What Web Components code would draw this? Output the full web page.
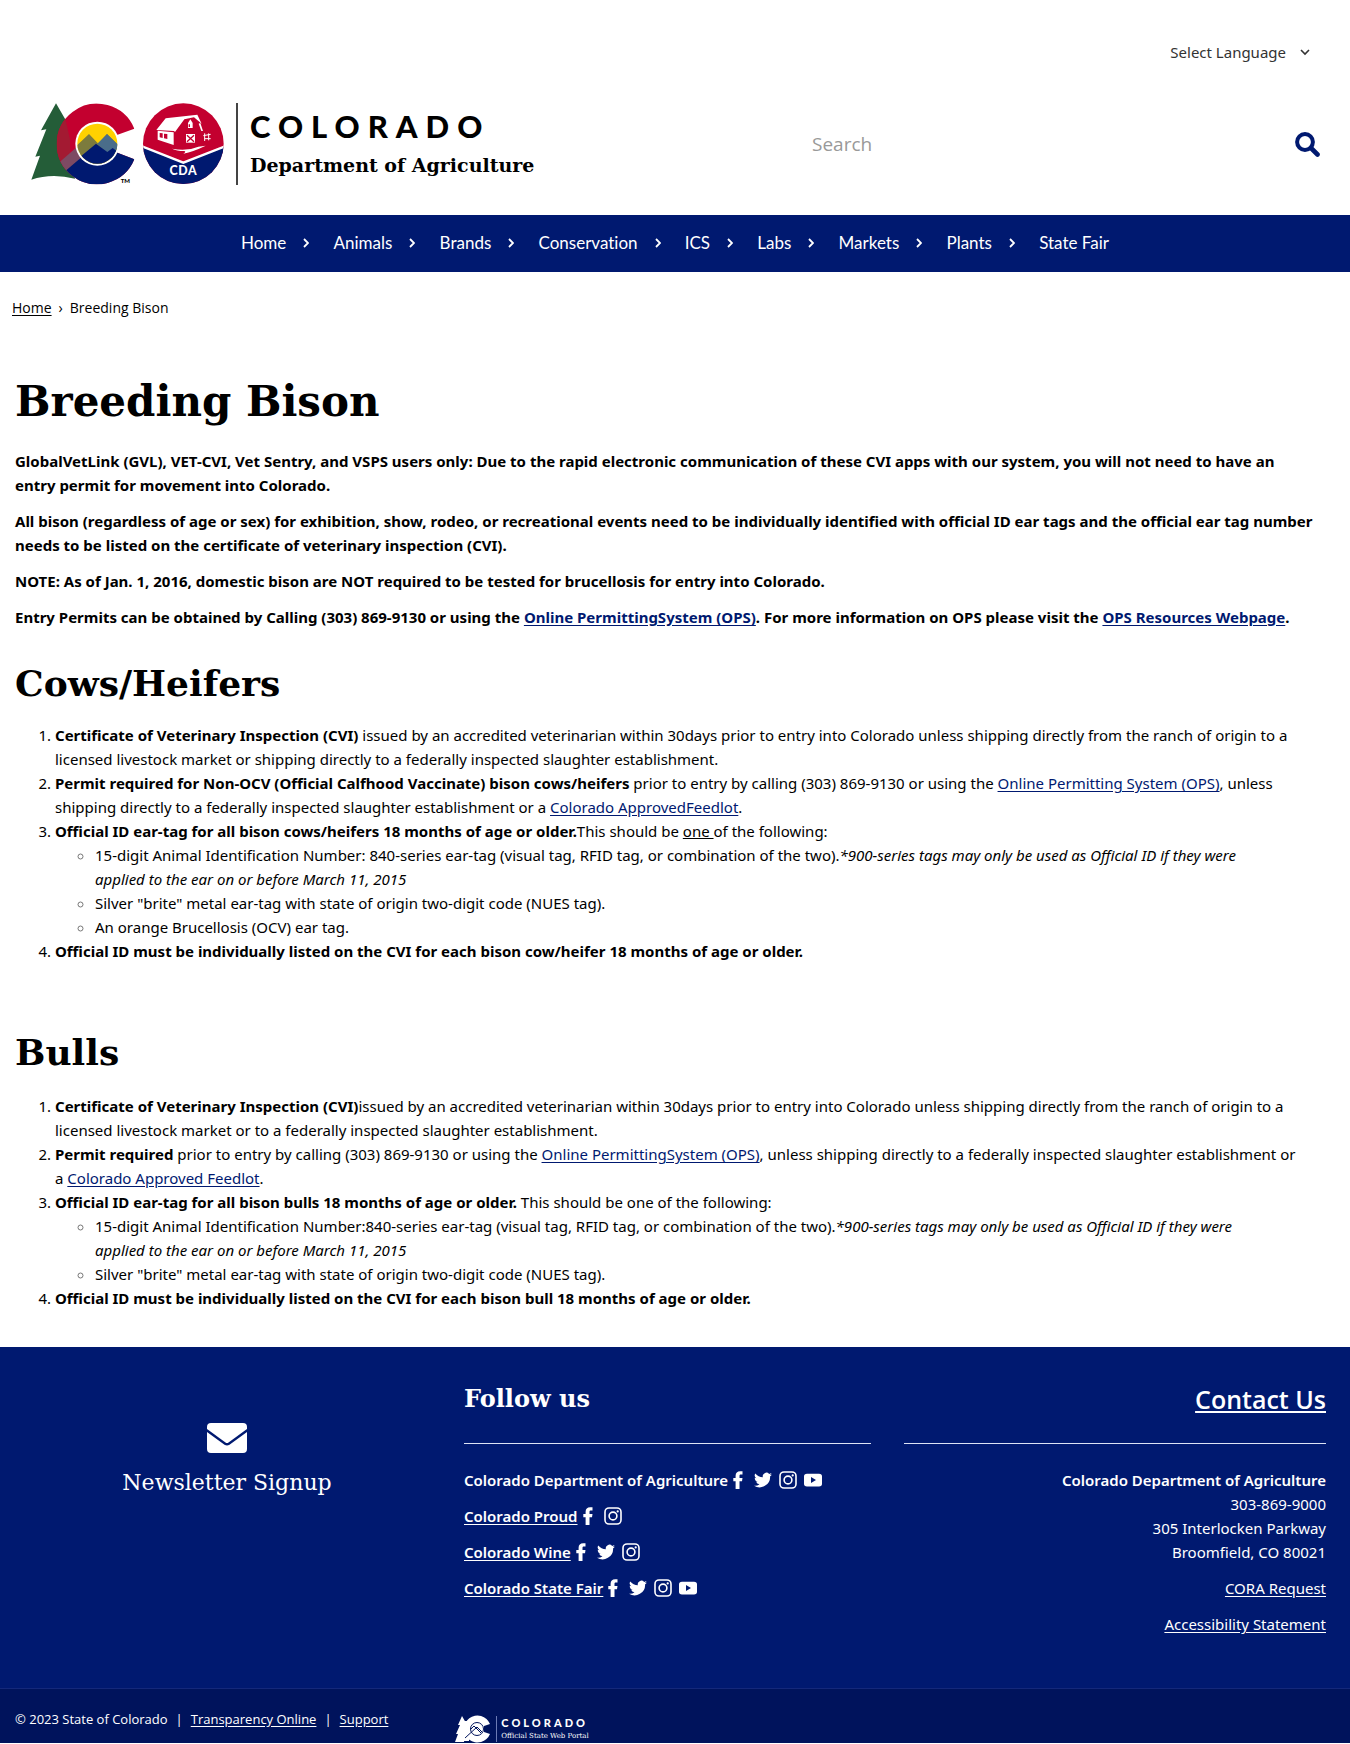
<!DOCTYPE html>
<html lang="en">
<head>
<meta charset="utf-8">
<title>Breeding Bison | Department of Agriculture</title>
<style>
  body {
    --navy: #001970;
    --sans: Lato, "Open Sans", sans-serif;
    --body: "Noto Sans", "Open Sans", sans-serif;
    --label: "Open Sans", "Noto Sans", sans-serif;
    --slab: "DejaVu Serif", serif;
    margin: 0;
    background: #fff;
    color: #000;
    font: 15px/24px var(--body);
  }
</style>
</head>
<body>
<co-header></co-header>
<co-nav></co-nav>
<co-crumbs>Breeding Bison</co-crumbs>
<co-article></co-article>
<co-footer></co-footer>

<script>
function define(name, html) {
  const template = document.createElement('template');
  template.innerHTML = html;
  customElements.define(name, class extends HTMLElement {
    constructor() {
      super();
      this.attachShadow({ mode: 'open' }).append(template.content.cloneNode(true));
    }
  });
}

/* Single icons, chosen by the name attribute */
const ICONS = {
  facebook: ['0 0 18 18', '<path d="M6.600 18V10.200H4.300V6.900H6.600V4.700C6.600 1.700 8.300.2 11.200.2H13.500V3.500H12C10.900 3.500 10.500 4 10.500 4.900V6.900H13.500L13 10.200H10.500V18Z"/>'],
  twitter: ['0 0 24 24', '<path d="M24 4.600a10 10 0 0 1-2.800.8 5 5 0 0 0 2.100-2.700 10 10 0 0 1-3.100 1.200 4.900 4.900 0 0 0-8.400 4.500A14 14 0 0 1 1.700 3.200a4.900 4.900 0 0 0 1.500 6.500 4.900 4.900 0 0 1-2.200-.6v.1a4.900 4.900 0 0 0 3.900 4.800 4.900 4.900 0 0 1-2.200.1 4.900 4.900 0 0 0 4.600 3.400A9.900 9.900 0 0 1 0 19.500a14 14 0 0 0 21.500-12.400A10 10 0 0 0 24 4.600z"/>'],
  instagram: ['0 0 18 18', '<rect x="1" y="1" width="16" height="16" rx="4" fill="none" stroke="currentColor" stroke-width="1.600"/><circle cx="9" cy="9" r="3.900" fill="none" stroke="currentColor" stroke-width="1.600"/><circle cx="13.700" cy="4.400" r="1.100"/>'],
  youtube: ['0 0 18 18', '<path fill-rule="evenodd" d="M3 2.800H15Q18 2.800 18 5.500V12.700Q18 15.400 15 15.400H3Q0 15.400 0 12.700V5.500Q0 2.800 3 2.800ZM7 6V12L12 9Z"/>'],
  envelope: ['0 0 40 30', '<path d="M4 0H36Q40 0 40 4V6L21.500 19.600Q20 20.600 18.500 19.600L0 6V4Q0 0 4 0Z"/><path d="M0 9L17.500 21.800Q20 23.400 22.500 21.800L40 9V26Q40 30 36 30H4Q0 30 0 26Z"/>'],
  search: ['0 0 25 25', '<circle cx="10" cy="10" r="7.900" fill="none" stroke="currentColor" stroke-width="4"/><path d="M16 16L22.500 22.500" stroke="currentColor" stroke-width="4.600" stroke-linecap="round"/>'],
  right: ['0 0 6 10', '<path d="M1 1L5 5L1 9" fill="none" stroke="currentColor" stroke-width="1.800"/>'],
  down: ['0 0 10 10', '<path d="M1 3L5 7L9 3" fill="none" stroke="currentColor" stroke-width="1.600"/>']
};
customElements.define('co-icon', class extends HTMLElement {
  constructor() {
    super();
    const [box, body] = ICONS[this.getAttribute('name')];
    this.attachShadow({ mode: 'open' }).innerHTML =
      `<style>:host{display:block;flex:none;width:18px;height:18px}svg{display:block;width:100%;height:100%;fill:currentColor}</style>
       <svg viewBox="${box}" aria-hidden="true">${body}</svg>`;
  }
});

define('co-logo', `
<style>
  :host { display: flex; height: 82px; align-items: stretch; }
  svg { display: block; width: 196px; height: 82px; flex: none; overflow: visible; }
  svg text { font-family: var(--sans); font-weight: 900; }
  .words { margin-left: 9px; padding-left: 12px; border-left: 2px solid #444; display: flex; flex-direction: column; justify-content: center; gap: 9px; }
  .state { font: 900 31px/32px var(--sans); letter-spacing: 8px; }
  .dept { font: bold 19px/28px var(--slab); white-space: nowrap; }
</style>
<svg viewBox="33 41 588 246" role="img" aria-label="State of Colorado and Department of Agriculture">
  <defs>
    <clipPath id="c"><path d="M343 118A121 121 0 1 0 343 210L288 189A60 60 0 1 1 288 138Z"/><circle cx="232" cy="163" r="62"/></clipPath>
    <clipPath id="sun"><circle cx="232" cy="163" r="60"/></clipPath>
    <clipPath id="badge"><circle cx="490" cy="163" r="121"/></clipPath>
  </defs>
  <path fill="#245d38" d="M108 42L137 92L172 150L155 200L165 268Q95 250 34 271L60 199L46 202L79 120L63 123Z"/>
  <g clip-path="url(#c)">
    <rect x="100" y="30" width="260" height="260" fill="#c3002f"/>
    <path d="M108 42L137 92L150 150V268H100V60Z" fill="#a31a32"/>
    <path d="M100 235L180 165L230 185L180 290H100Z" fill="#7d4a63"/>
    <path d="M130 250L232 163L290 180L350 190V300H130Z" fill="#001970"/>
  </g>
  <circle cx="232" cy="163" r="66" fill="#fff"/>
  <g clip-path="url(#sun)">
    <rect x="170" y="100" width="125" height="125" fill="#ffd100"/>
    <path d="M160 178L207 134L235 163L261 134L300 172V230H160Z" fill="#7c7b3d"/>
    <path d="M232 163L261 134L300 172V230Z" fill="#4a6d8a"/>
    <path d="M160 220L228 163L262 188L278 176L300 192V240H160Z" fill="#001970"/>
  </g>
  <text x="302" y="282" font-size="18">TM</text>
  <circle cx="490" cy="163" r="121" fill="#c3002f"/>
  <g clip-path="url(#badge)">
    <path d="M365 171L490 220L615 171V290H365Z" fill="#001970"/>
    <path d="M365 171L490 220L615 171" fill="none" stroke="#fff" stroke-width="7"/>
  </g>
  <g fill="#fff">
    <path d="M409 122L437 87L532 76L545 103L522 84L493 90L465 128L462 125Z"/>
    <path d="M413 124L461 129V167L413 151Z"/>
    <path d="M504 101L511 90L518 101V116H504Z"/>
    <path d="M498 134H525V160H498Z"/>
    <path d="M541 101L549 125H544L536 103Z"/>
    <path d="M456 178Q500 187 535 172L557 169Q520 187 490 193Q500 187 493 185Q470 185 456 178Z"/>
  </g>
  <path d="M419 131L428 132V146L419 144ZM432 133L442 134V149L432 147Z" fill="#c3002f"/>
  <path d="M501 138L522 157M522 138L501 157M508 105V113" stroke="#c3002f" stroke-width="4"/>
  <path d="M554 155V132M566 153V132M550 139L572 135M554 148H572" stroke="#fff" stroke-width="3"/>
  <text x="490" y="258" font-size="37" text-anchor="middle" letter-spacing="2" fill="#fff">CDA</text>
</svg>
<div class="words"><span class="state">COLORADO</span><span class="dept">Department of Agriculture</span></div>
`);

define('co-header', `
<style>
  :host { display: block; padding: 40px 30px 30px 31px; }
  .lang { display: flex; justify-content: flex-end; align-items: center; gap: 14px; padding-right: 10px; color: #333; }
  select { appearance: none; border: 0; background: none; padding: 0; margin: 0; color: inherit; font: 15px/24px var(--body); field-sizing: content; }
  .lang co-icon { width: 10px; height: 10px; }
  .row { display: flex; align-items: center; justify-content: space-between; margin-top: 39px; }
  form { display: flex; align-items: center; flex: 0 1 508px; margin: 0; }
  input { flex: 1; min-width: 0; border: 0; padding: 0; background: none; font: 19px/28px var(--label); color: #333; outline: 0; }
  input::placeholder { color: #999; }
  button { border: 0; background: none; padding: 0; color: var(--navy); }
  button co-icon { width: 25px; height: 25px; }
</style>
<div class="lang"><select aria-label="Select Language"><option>Select Language</option></select><co-icon name="down"></co-icon></div>
<div class="row">
  <co-logo></co-logo>
  <form role="search"><input type="search" placeholder="Search" aria-label="Search"><button type="button" aria-label="Search"><co-icon name="search"></co-icon></button></form>
</div>
`);

define('co-nav-item', `
<style>
  :host { display: flex; align-items: center; gap: 17px; }
  a { color: #fff; text-decoration: none; font: 17px/24px var(--sans); font-variant-ligatures: none; }
  co-icon { width: 6px; height: 10px; }
  :host([last]) co-icon { display: none; }
</style>
<a href="#"><slot></slot></a><co-icon name="right"></co-icon>
`);

define('co-nav', `
<style>
  :host { display: block; background: var(--navy); color: #fff; }
  nav { display: flex; justify-content: space-between; max-width: 868px; margin: 0 auto; padding: 16px 0 17px; }
</style>
<nav aria-label="Main">
  <co-nav-item>Home</co-nav-item><co-nav-item>Animals</co-nav-item><co-nav-item>Brands</co-nav-item>
  <co-nav-item>Conservation</co-nav-item><co-nav-item>ICS</co-nav-item><co-nav-item>Labs</co-nav-item>
  <co-nav-item>Markets</co-nav-item><co-nav-item>Plants</co-nav-item><co-nav-item last>State Fair</co-nav-item>
</nav>
`);

define('co-crumbs', `
<style>
  :host { display: block; padding: 24px 12px 0; font-family: var(--label); font-size: 14px; }
  nav { display: flex; gap: 7px; }
  a { color: inherit; text-underline-offset: 2px; }
</style>
<nav aria-label="Breadcrumb"><a href="#">Home</a><span>›</span><span><slot></slot></span></nav>
`);

define('co-article', `
<style>
  :host { display: block; padding: 54px 15px 37px; }
  h1, h2 { margin: 0; font-family: var(--slab); font-weight: bold; }
  h1 { font-size: 42px; line-height: 56px; margin-bottom: 19px; }
  h2 { font-size: 36px; line-height: 48px; margin: 30px 0 16px; }
  p { margin: 0 0 12px; font-weight: 700; }
  ol, ul { margin: 0; padding-left: 40px; }
  ol + h2 { margin: 65px 0 18px; }
  ul li::marker { color: #777; }
  a { color: var(--navy); text-underline-offset: 2px; }
</style>
<h1>Breeding Bison</h1>
<p>GlobalVetLink (GVL), VET-CVI, Vet Sentry, and VSPS users only: Due to the rapid electronic communication of these CVI apps with our system, you will not need to have an<br>entry permit for movement into Colorado.</p>
<p>All bison (regardless of age or sex) for exhibition, show, rodeo, or recreational events need to be individually identified with official ID ear tags and the official ear tag number needs to be listed on the certificate of veterinary inspection (CVI).</p>
<p>NOTE: As of Jan. 1, 2016, domestic bison are NOT required to be tested for brucellosis for entry into Colorado.</p>
<p>Entry Permits can be obtained by Calling (303) 869-9130 or using the <a href="#">Online PermittingSystem (OPS)</a>. For more information on OPS please visit the <a href="#">OPS Resources Webpage</a>.</p>
<h2>Cows/Heifers</h2>
<ol>
  <li><b>Certificate of Veterinary Inspection (CVI)</b> issued by an accredited veterinarian within 30days prior to entry into Colorado unless shipping directly from the ranch of origin to a<br>licensed livestock market or shipping directly to a federally inspected slaughter establishment.</li>
  <li><b>Permit required for Non-OCV (Official Calfhood Vaccinate) bison cows/heifers</b> prior to entry by calling (303) 869-9130 or using the <a href="#">Online Permitting System (OPS)</a>, unless<br>shipping directly to a federally inspected slaughter establishment or a <a href="#">Colorado ApprovedFeedlot</a>.</li>
  <li><b>Official ID ear-tag for all bison cows/heifers 18 months of age or older.</b>This should be <u>one </u>of the following:
    <ul>
      <li>15-digit Animal Identification Number: 840-series ear-tag (visual tag, RFID tag, or combination of the two).<i>*900-series tags may only be used as Official ID if they were<br>applied to the ear on or before March 11, 2015</i></li>
      <li>Silver "brite" metal ear-tag with state of origin two-digit code (NUES tag).</li>
      <li>An orange Brucellosis (OCV) ear tag.</li>
    </ul></li>
  <li><b>Official ID must be individually listed on the CVI for each bison cow/heifer 18 months of age or older.</b></li>
</ol>
<h2>Bulls</h2>
<ol>
  <li><b>Certificate of Veterinary Inspection (CVI)</b>issued by an accredited veterinarian within 30days prior to entry into Colorado unless shipping directly from the ranch of origin to a<br>licensed livestock market or to a federally inspected slaughter establishment.</li>
  <li><b>Permit required</b> prior to entry by calling (303) 869-9130 or using the <a href="#">Online PermittingSystem (OPS)</a>, unless shipping directly to a federally inspected slaughter establishment or<br>a <a href="#">Colorado Approved Feedlot</a>.</li>
  <li><b>Official ID ear-tag for all bison bulls 18 months of age or older.</b> This should be one of the following:
    <ul>
      <li>15-digit Animal Identification Number:840-series ear-tag (visual tag, RFID tag, or combination of the two).<i>*900-series tags may only be used as Official ID if they were<br>applied to the ear on or before March 11, 2015</i></li>
      <li>Silver "brite" metal ear-tag with state of origin two-digit code (NUES tag).</li>
    </ul></li>
  <li><b>Official ID must be individually listed on the CVI for each bison bull 18 months of age or older.</b></li>
</ol>
`);

/* One row of accounts; the nets attribute lists the networks */
customElements.define('co-social', class extends HTMLElement {
  constructor() {
    super();
    const links = this.getAttribute('nets').split(' ')
      .map(n => `<a href="#" aria-label="${n}"><co-icon name="${n}"></co-icon></a>`).join('');
    this.attachShadow({ mode: 'open' }).innerHTML =
      `<style>:host{display:flex;align-items:center;gap:1px;margin-bottom:12px;font-weight:600}
       .nets{display:flex;gap:7px}a{color:#fff}</style><slot></slot><span class="nets">${links}</span>`;
  }
});

define('co-footer', `
<style>
  :host { display: block; background: var(--navy); color: #fff; }
  a { color: #fff; text-underline-offset: 2px; }
  b { font-weight: 600; }
  .cols { display: grid; grid-template-columns: 449fr 407fr 455fr; padding: 32px 24px 40px 15px; }
  .news { display: flex; flex-direction: column; align-items: center; gap: 16px; padding: 44px 25px 0 0; font: 22px/28px var(--slab); }
  .news co-icon { width: 40px; height: 30px; }
  .news a { text-decoration: none; display: contents; }
  h2 { margin: 0 0 24px; font: bold 24px/40px var(--slab); }
  hr { border: 0; border-top: 1px solid #dde3f5; margin: 0 0 24px; }
  .contact { padding-left: 33px; text-align: right; }
  .contact h2 { font-family: var(--label); font-size: 25px; font-weight: 600; }
  p { margin: 0 0 12px; }
  .bar { display: flex; align-items: flex-start; gap: 67px; padding: 18px 15px 0; min-height: 36px; background: #00135c; border-top: 1px solid #14287a; font: 13px/24px var(--label); }
  .bar .links { display: flex; gap: 8px; }
  .portal { display: flex; align-items: center; gap: 5px; padding-top: 8px; }
  .portal svg { width: 36px; height: 28px; }
  .portal div { border-left: 1px solid #6c7ab5; padding-left: 4px; }
  .portal strong { display: block; font: 900 11px/14px var(--sans); letter-spacing: 3px; }
  .portal small { display: block; font: 7px/12px var(--slab); }
</style>
<div class="cols">
  <div class="news"><a href="#"><co-icon name="envelope"></co-icon><span>Newsletter Signup</span></a></div>
  <div>
    <h2>Follow us</h2><hr>
    <co-social nets="facebook twitter instagram youtube"><span>Colorado Department of Agriculture</span></co-social>
    <co-social nets="facebook instagram"><a href="#">Colorado Proud</a></co-social>
    <co-social nets="facebook twitter instagram"><a href="#">Colorado Wine</a></co-social>
    <co-social nets="facebook twitter instagram youtube"><a href="#">Colorado State Fair</a></co-social>
  </div>
  <div class="contact">
    <h2><a href="#">Contact Us</a></h2><hr>
    <p><b>Colorado Department of Agriculture</b><br>303-869-9000<br>305 Interlocken Parkway<br>Broomfield, CO 80021</p>
    <p><a href="#">CORA Request</a></p>
    <p><a href="#">Accessibility Statement</a></p>
  </div>
</div>
<div class="bar">
  <div class="links"><span>© 2023 State of Colorado</span><span>|</span><a href="#">Transparency Online</a><span>|</span><a href="#">Support</a></div>
  <div class="portal">
    <svg viewBox="0 0 36 28" aria-hidden="true">
      <path fill="#fff" d="M7 1L11 8L9 27H0L3 19H1L5 10H3Z"/>
      <path fill="#fff" d="M35 9A13.500 13.500 0 1 0 35 19L29 17V11Z"/>
      <path fill="#fff" d="M8 6H14V26H8Z"/>
      <circle cx="22" cy="14" r="6.500" fill="none" stroke="#00135c"/>
      <path d="M10 23L22 12L27 17M16 14L19 11L26 18" fill="none" stroke="#00135c"/>
    </svg>
    <div><strong>COLORADO</strong><small>Official State Web Portal</small></div>
  </div>
</div>
`);
</script>
</body>
</html>
